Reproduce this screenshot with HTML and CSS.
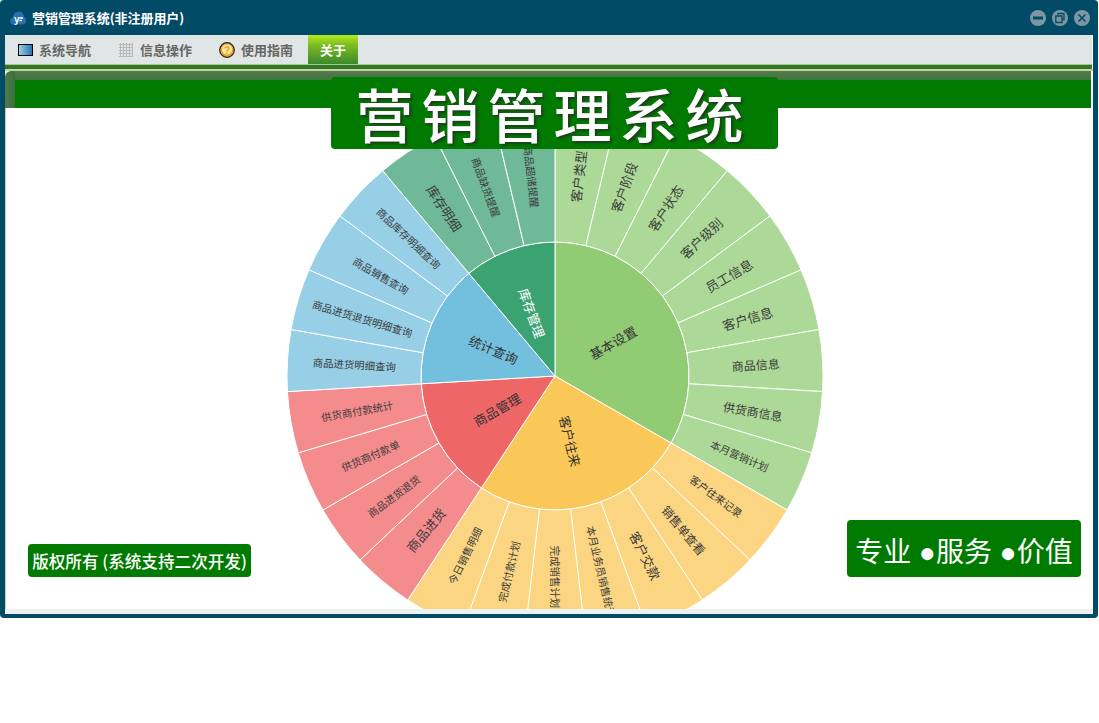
FILE: index.html
```html
<!DOCTYPE html>
<html lang="zh-CN">
<head>
<meta charset="utf-8">
<title>营销管理系统</title>
<link rel="stylesheet" href="styles.css">
</head>
<body>
<div class="window">
  <header class="titlebar">
    <svg class="logo" viewBox="0 0 16 14" width="16" height="14" aria-hidden="true">
      <path d="M3 13.500C1 13.500 0 11.500 0 10C0 8 1.500 6.800 2.800 6.600C3 3.500 5.500 .5 8.800 .5C12 .5 13.800 3 14 5.800C15.300 6.500 16 8 16 9.800C16 12 14.500 13.500 12.500 13.500Z" fill="#2a6fae"/>
      <text class="logo-mark" x="4" y="11.500">y</text>
      <path d="M9.500 7H13M9.500 9.500H12" stroke="#fff" stroke-width="1.300" fill="none"/>
    </svg>
    <span class="app-title">营销管理系统(非注册用户)</span>
    <div class="win-btns">
      <svg class="win-btn" viewBox="0 0 16 16" width="16" height="16" aria-hidden="true">
        <circle cx="8" cy="8" r="8" fill="#7e96a2"/>
        <rect x="3" y="6.500" width="10" height="3" fill="#024b66"/>
      </svg>
      <svg class="win-btn" viewBox="0 0 16 16" width="16" height="16" aria-hidden="true">
        <circle cx="8" cy="8" r="8" fill="#7e96a2"/>
        <path d="M6 5V3.500H12V9.500H10.500M3.800 6H10V12.500H3.800Z" fill="none" stroke="#024b66" stroke-width="1.300"/>
      </svg>
      <svg class="win-btn" viewBox="0 0 16 16" width="16" height="16" aria-hidden="true">
        <circle cx="8" cy="8" r="8" fill="#7e96a2"/>
        <path d="M4.500 4.500L11.500 11.500M11.500 4.500L4.500 11.500" fill="none" stroke="#024b66" stroke-width="1.600"/>
      </svg>
    </div>
  </header>

  <nav class="menubar">
    <a class="menu-item">
      <svg viewBox="0 0 15 12" width="15" height="12" aria-hidden="true">
        <defs><linearGradient id="screen" x1="0" x2="1"><stop offset="0" stop-color="#9fd0ee"/><stop offset="1" stop-color="#2570ae"/></linearGradient></defs>
        <rect x=".5" y=".5" width="14" height="11" fill="url(#screen)" stroke="#000"/>
      </svg>
      <span>系统导航</span>
    </a>
    <a class="menu-item">
      <svg viewBox="0 0 14 14" width="14" height="14" aria-hidden="true">
        <path d="M1.500 0V14M4.500 0V14M7.500 0V14M10.500 0V14M13.500 0V14M0 1.500H14M0 4.500H14M0 7.500H14M0 10.500H14M0 13.500H14" stroke="#b8b8b8" stroke-width="1" fill="none"/>
      </svg>
      <span>信息操作</span>
    </a>
    <a class="menu-item">
      <svg viewBox="0 0 16 16" width="16" height="16" aria-hidden="true">
        <circle cx="8" cy="8" r="7.300" fill="#f2a32c" stroke="#222" stroke-width="1.200"/>
        <circle cx="8" cy="7.500" r="5" fill="#fbe9a0"/>
        <text class="help-mark" x="8" y="11.500">?</text>
      </svg>
      <span>使用指南</span>
    </a>
    <a class="menu-tab">关于</a>
  </nav>
  <div class="menu-rule"></div>

  <section class="panel">
    <div class="panel-head">
      <div class="head-side"></div>
      <div class="head-top"></div>
      <div class="head-main"></div>
    </div>
    <div class="panel-body">
      <svg id="sunburst" class="sunburst" viewBox="0 0 538 538" width="538" height="538" role="img" aria-label="功能结构图"></svg>
    </div>
    <div class="panel-foot"></div>

    <h1 class="banner">营销管理系统</h1>
    <div class="copyright">版权所有 (系统支持二次开发)</div>
    <div class="slogan">专业 ●服务 ●价值</div>
  </section>
</div>
<script src="chart.js"></script>
</body>
</html>
```
FILE: styles.css
```css
* { box-sizing: border-box; }

html, body { margin: 0; padding: 0; background: #fff; }

body {
  font-family: "Noto Sans CJK SC", "Noto Sans", sans-serif;
  height: 723px;
  overflow: hidden;
}

.window {
  width: 1098px;
  height: 618px;
  background: #024b66;
  border-radius: 4px;
  padding: 0 5px 4px 5px;
  display: flex;
  flex-direction: column;
}

.titlebar {
  height: 35px;
  flex: none;
  display: flex;
  align-items: center;
  padding: 0 3px 0 5px;
  color: #fff;
}

.logo { margin-right: 6px; margin-top: 1px; }
.logo-mark { font: bold 10px "Liberation Sans", sans-serif; fill: #fff; }

.app-title {
  font-size: 13px;
  font-weight: 700;
  line-height: 35px;
  letter-spacing: -0.05px;
}

.win-btns { margin-left: auto; display: flex; gap: 6px; }
.win-btn { display: block; }

.menubar {
  height: 30px;
  flex: none;
  display: flex;
  align-items: stretch;
  padding-left: 13px;
  background: #e0e5e5;
  border-bottom: 1px solid #a9bfa0;
  border-right: 1px solid #fff;
}

.menu-item {
  display: flex;
  align-items: center;
  gap: 6px;
  margin-right: 27px;
  color: #666;
  font-size: 13px;
  font-weight: 700;
}

.menu-item:nth-child(1) { margin-right: 28px; }
.menu-item:nth-child(2) { gap: 7px; }
.menu-item:nth-child(3) { margin-right: 15px; }

.menu-tab {
  width: 50px;
  display: flex;
  align-items: center;
  justify-content: center;
  color: #fff;
  font-size: 13px;
  font-weight: 700;
  background: linear-gradient(#b6ea1c, #7cbb22 35%, #3b8a2c);
}

.menu-rule {
  height: 4px;
  flex: none;
  background: #2f7a1f;
  border-right: 1px solid #fff;
}

.panel {
  position: relative;
  flex: 1;
  min-height: 0;
  display: flex;
  flex-direction: column;
  background: #fff;
  border-top: 2px solid #c8cfa6;
}

.panel-head {
  height: 37px;
  flex: none;
  display: grid;
  grid-template-columns: 10px 1fr 2px;
  grid-template-rows: 9px 1fr;
  background: #fff;
  position: relative;
  z-index: 1;
}

.head-side {
  grid-row: 1 / 3;
  background: linear-gradient(90deg, #4f7a4e, #3a6f3c);
  border-top-left-radius: 6px;
}

.head-top { background: linear-gradient(#56784e, #3c763a); }

.head-main { grid-column: 2; background: #007a00; }

.panel-body {
  flex: 1;
  min-height: 0;
  overflow: hidden;
  display: flex;
  justify-content: center;
  padding-left: 10px;
  border-left: 1px solid #c8cfa6;
}

.sunburst { flex: none; display: block; margin-top: -1px; }

.panel-foot { height: 5px; flex: none; background: #edf1f1; }

.slice { stroke: #fff; stroke-width: 1; }

.label {
  font-family: "Noto Sans CJK SC", sans-serif;
  text-anchor: middle;
  dominant-baseline: central;
  fill: #3c3c3c;
}

.label-inner { font-size: 13px; fill: #333; }
.label-inner-light { fill: #fff; }
.label-leaf { font-size: 12px; }
.label-leaf-mid { font-size: 13px; }
.label-leaf-small { font-size: 10.4px; }

.help-mark {
  font: bold 10px "Liberation Sans", sans-serif;
  text-anchor: middle;
  fill: #e8a020;
}

.banner {
  position: absolute;
  z-index: 2;
  left: 326px;
  top: 6px;
  width: 447px;
  height: 72px;
  margin: 0;
  padding-right: 2px;
  border-radius: 4px;
  background: #007a00;
  color: #fff;
  font-size: 58px;
  font-weight: 500;
  letter-spacing: 8px;
  line-height: 72px;
  text-align: center;
  white-space: nowrap;
  text-shadow: 2px 2px 3px #1e3a1e;
}

.copyright {
  position: absolute;
  z-index: 2;
  left: 23px;
  top: 473px;
  width: 223px;
  height: 33px;
  padding-top: 1px;
  border-radius: 4px;
  background: #007a00;
  color: #fff;
  font-size: 16.6px;
  font-weight: 500;
  line-height: 33px;
  text-align: center;
  white-space: nowrap;
}

.slogan {
  position: absolute;
  z-index: 2;
  left: 842px;
  top: 449px;
  width: 234px;
  height: 57px;
  padding-top: 4px;
  border-radius: 4px;
  background: #007a00;
  color: #fff;
  font-family: "Liberation Sans", "Noto Sans CJK SC", sans-serif;
  font-size: 28px;
  line-height: 57px;
  text-align: center;
  white-space: nowrap;
}
```
FILE: chart.js
```js
var NS = "http://www.w3.org/2000/svg";
var CENTER = 269, R0 = 134, R1 = 268, STEP = 360 / 27;

var groups = [
  { name: "基本设置", fill: "#91cc75", leafFill: "#acd997", leaves: [
    ["客户类型", "mid"], ["客户阶段", "mid"], ["客户状态", "mid"], ["客户级别", "mid"], ["员工信息", "mid"],
    ["客户信息", "mid"], ["商品信息"], ["供货商信息"], ["本月营销计划", "small"]
  ]},
  { name: "客户往来", fill: "#fac858", leafFill: "#fbd581", leaves: [
    ["客户往来记录", "small"], ["销售单查看"], ["客户交款", "mid"], ["本月业务员销售统计", "small"],
    ["完成销售计划", "small"], ["完成付款计划", "small"], ["今日销售明细", "small"]
  ]},
  { name: "商品管理", fill: "#ee6666", leafFill: "#f48b8c", leaves: [
    ["商品进货", "mid"], ["商品进货退货", "small"], ["供货商付款单", "small"], ["供货商付款统计", "small"]
  ]},
  { name: "统计查询", fill: "#73c0de", leafFill: "#96cfe6", leaves: [
    ["商品进货明细查询", "small"], ["商品进货退货明细查询", "small"], ["商品销售查询", "small"], ["商品库存明细查询", "small"]
  ]},
  { name: "库存管理", fill: "#3ba272", leafFill: "#6fb998", light: true, leaves: [
    ["库存明细", "mid"], ["商品缺货提醒", "small"], ["商品超储提醒", "small"]
  ]}
];

function point(r, deg) {
  var a = deg * Math.PI / 180;
  return [CENTER + r * Math.sin(a), CENTER - r * Math.cos(a)];
}

function sector(r0, r1, a0, a1) {
  var large = a1 - a0 > 180 ? 1 : 0;
  var p = [point(r1, a0), point(r1, a1), point(r0, a1), point(r0, a0)];
  var d = "M" + p[0] + "A" + r1 + " " + r1 + " 0 " + large + " 1 " + p[1] + "L" + p[2];
  d += r0 ? "A" + r0 + " " + r0 + " 0 " + large + " 0 " + p[3] + "Z" : "Z";
  return d;
}

function add(tag, attrs, text) {
  var el = document.createElementNS(NS, tag);
  for (var k in attrs) el.setAttribute(k, attrs[k]);
  if (text) el.textContent = text;
  document.getElementById("sunburst").appendChild(el);
}

function label(text, r, deg, cls) {
  var p = point(r, deg);
  var rot = deg <= 180.001 ? deg - 90 : deg - 270;
  add("text", {
    "class": "label " + cls,
    x: p[0], y: p[1],
    transform: "rotate(" + rot + " " + p[0] + " " + p[1] + ")"
  }, text);
}

var start = 0;
groups.forEach(function (g) {
  var end = start + g.leaves.length * STEP;
  add("path", { "class": "slice", d: sector(0, R0, start, end), fill: g.fill });
  g.leaves.forEach(function (leaf, i) {
    var a0 = start + i * STEP;
    add("path", { "class": "slice", d: sector(R0, R1, a0, a0 + STEP), fill: g.leafFill });
  });
  start = end;
});

start = 0;
groups.forEach(function (g) {
  var end = start + g.leaves.length * STEP;
  label(g.name, R0 / 2, (start + end) / 2, "label-inner" + (g.light ? " label-inner-light" : ""));
  g.leaves.forEach(function (leaf, i) {
    var cls = leaf[1] ? "label-leaf-" + leaf[1] : "label-leaf";
    label(leaf[0], (R0 + R1) / 2, start + (i + 0.5) * STEP, cls);
  });
  start = end;
});
```
